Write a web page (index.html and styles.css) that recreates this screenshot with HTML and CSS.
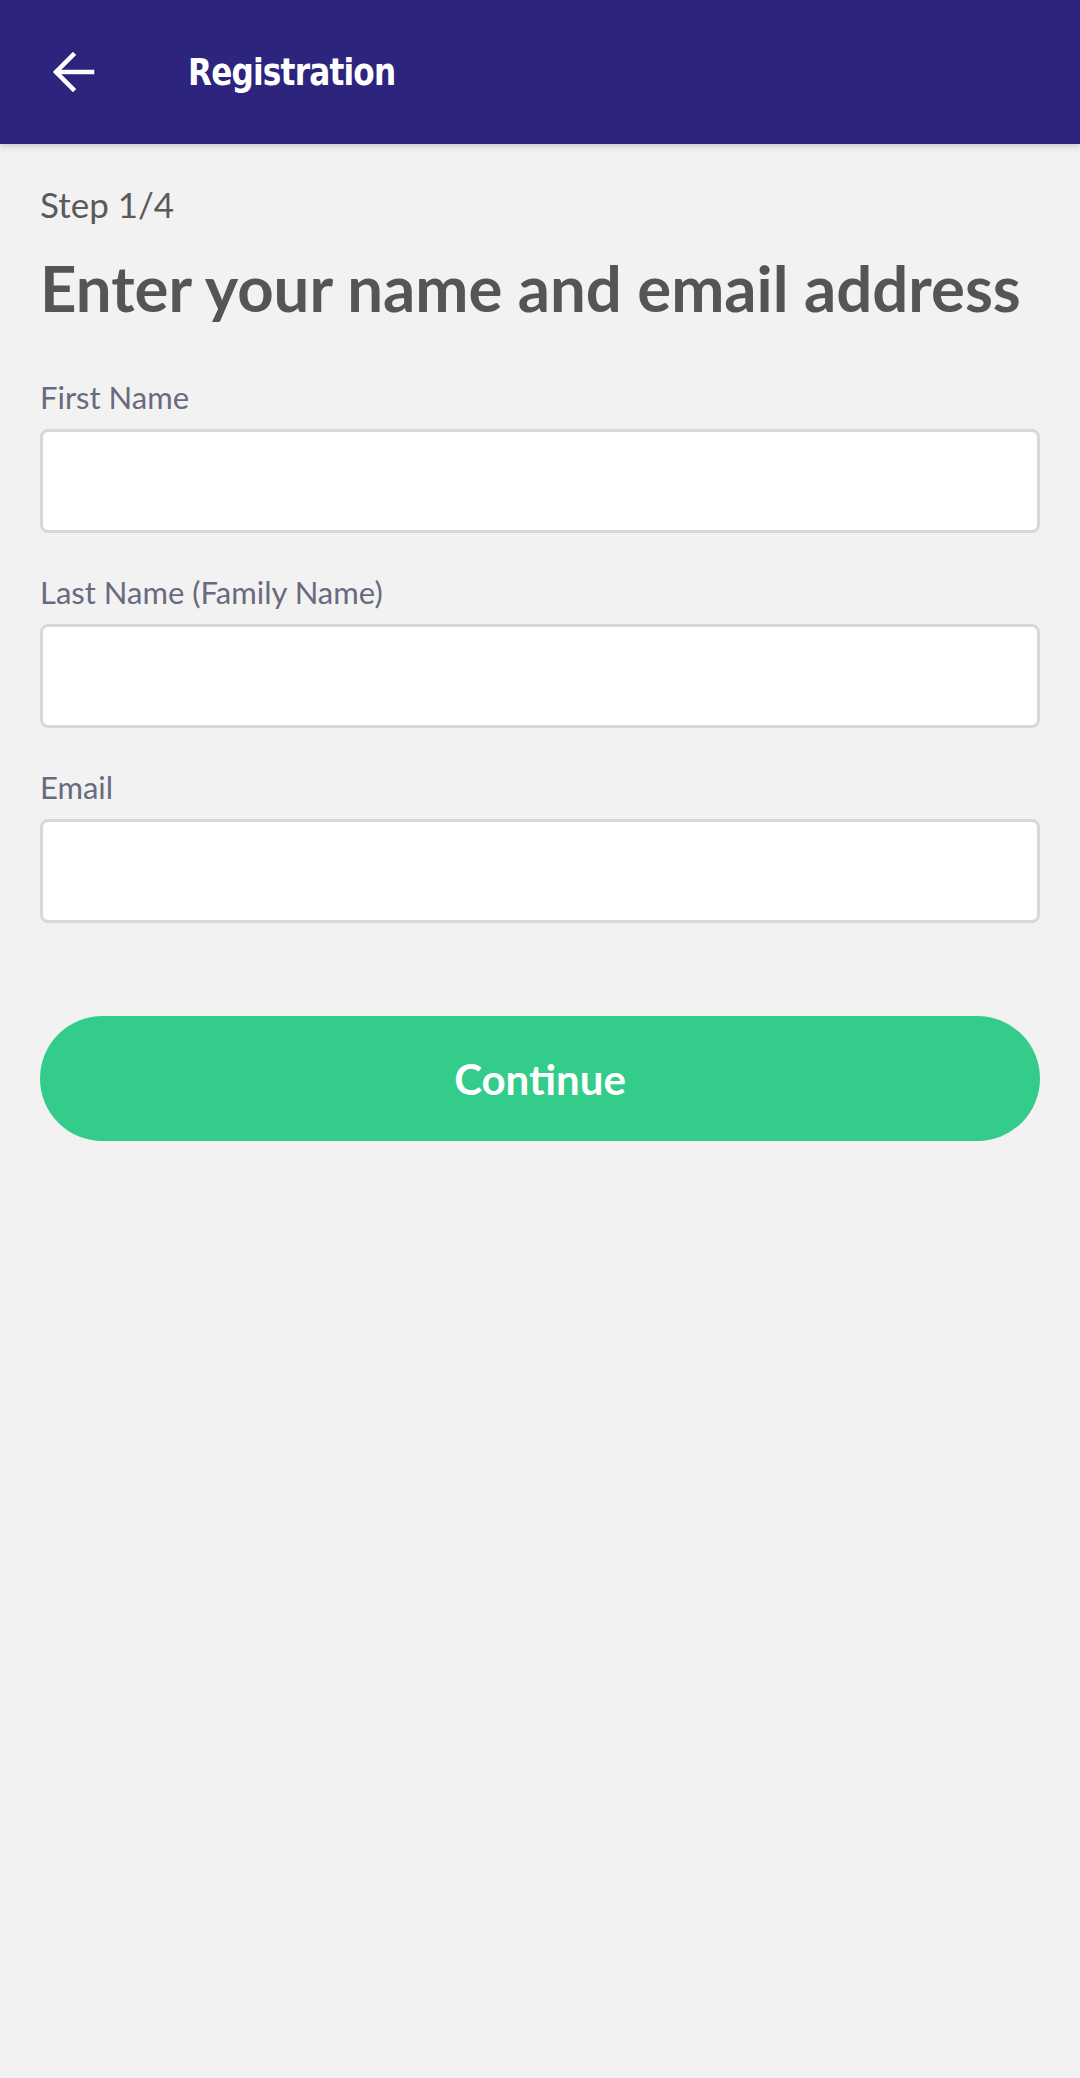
FILE: index.html
```html
<!DOCTYPE html>
<html lang="en">
<head>
  <meta charset="UTF-8">
  <meta name="viewport" content="width=device-width, initial-scale=1.0">
  <title>Registration</title>
  <link rel="stylesheet" href="styles.css">
</head>
<body>
<div class="container">
  <header class="header">
    <a class="back" href="#">
      <svg width="44" height="44" viewBox="0 0 44 44" fill="none" stroke="#fff" stroke-width="4.5" stroke-linecap="square">
        <path d="M40 22H6"/>
        <path d="M21 5L4 22l17 17"/>
      </svg>
    </a>
    <div class="title">Registration</div>
  </header>
  <main class="main">
    <div class="step">Step 1/4</div>
    <h1 class="heading">Enter your name and email address</h1>
    <form class="form">
      <label class="field">
        <span class="label">First Name</span>
        <input type="text" class="input">
      </label>
      <label class="field">
        <span class="label">Last Name (Family Name)</span>
        <input type="text" class="input">
      </label>
      <label class="field">
        <span class="label">Email</span>
        <input type="email" class="input">
      </label>
      <button type="button" class="continue-btn">Continue</button>
    </form>
  </main>
</div>
</body>
</html>
```

FILE: styles.css
```css
body {
  margin: 0;
  background-color: #f2f2f2;
  font-family: Lato, 'Open Sans', sans-serif;
}
.container {
  display: flex;
  flex-direction: column;
  min-height: 100vh;
}
.header {
  display: flex;
  align-items: center;
  height: 144px;
  padding: 0 0 0 52px;
  background-color: #2d247d;
  box-shadow: 0 2px 6px rgba(0, 0, 0, 0.18);
  box-sizing: border-box;
}
.back {
  display: flex;
  width: 44px;
  height: 44px;
}
.title {
  margin-left: 92px;
  color: #fff;
  font-family: 'DejaVu Sans', sans-serif;
  font-size: 38px;
  font-weight: bold;
  letter-spacing: -1px;
  transform: scaleX(0.82);
  transform-origin: left center;
}
.main {
  flex: 1;
  padding: 0 40px;
}
.step {
  padding-top: 38px;
  font-size: 35px;
  line-height: 44px;
  color: #5a5a5a;
}
.heading {
  margin: 24px 0 0;
  font-size: 63.5px;
  font-weight: bold;
  line-height: 76px;
  color: #555;
}
.form {
  display: flex;
  flex-direction: column;
}
.field {
  display: flex;
  flex-direction: column;
  margin-top: 39px;
}
.field:first-child {
  margin-top: 51px;
}
.label {
  font-size: 31px;
  line-height: 40px;
  color: #686b7e;
}
.input {
  margin-top: 12px;
  height: 104px;
  border: 3px solid #d8d8d8;
  border-radius: 8px;
  background-color: #fff;
  box-sizing: border-box;
  font-family: inherit;
  font-size: 31px;
  padding: 0 20px;
  outline: none;
}
.continue-btn {
  margin-top: 93px;
  height: 125px;
  border: none;
  border-radius: 63px;
  background-color: #33cc8b;
  color: #fff;
  font-family: Lato, sans-serif;
  font-size: 42px;
  font-weight: bold;
  cursor: pointer;
}
```
